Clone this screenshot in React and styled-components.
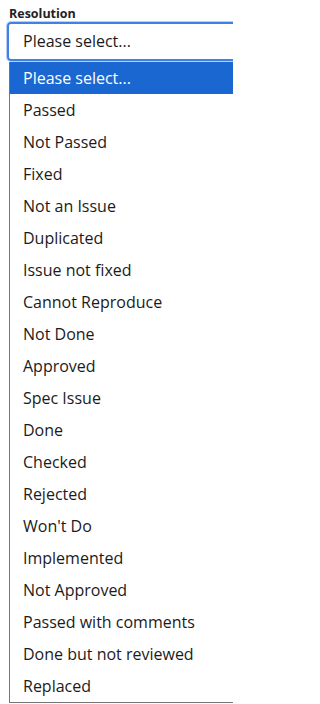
import React from "react";
import styled, { createGlobalStyle } from "styled-components";

const options = [
    "Please select...",
    "Passed",
    "Not Passed",
    "Fixed",
    "Not an Issue",
    "Duplicated",
    "Issue not fixed",
    "Cannot Reproduce",
    "Not Done",
    "Approved",
    "Spec Issue",
    "Done",
    "Checked",
    "Rejected",
    "Won't Do",
    "Implemented",
    "Not Approved",
    "Passed with comments",
    "Done but not reviewed",
    "Replaced",
];

const GlobalStyle = createGlobalStyle`
    html, body {
        margin: 0;
        padding: 0;
        background: #fff;
        overflow: hidden;
    }
    body {
        font-family: "Open Sans", "Noto Sans", sans-serif;
        color: #1b1b1b;
    }
`

const Page = styled.div`
    box-sizing: border-box;
    width: 233px;
    height: 704px;
    overflow: hidden;
    padding: 6px 0 0 7px;
`
const Label = styled.label`
    display: block;
    margin: 0 0 0 2px;
    height: 16px;
    font-size: 12.5px;
    line-height: 16px;
    font-weight: 700;
    color: #222;
`
const SelectBox = styled.div`
    box-sizing: border-box;
    display: flex;
    align-items: center;
    width: 280px;
    height: 39px;
    padding: 0 0 1px 14px;
    border: 2px solid #3f82e6;
    border-radius: 4px;
    box-shadow: 0 0 0 1px #b9d0f5;
    font-size: 16px;
    color: #1b1b1b;
`
const List = styled.ul`
    box-sizing: border-box;
    margin: 1px 0 0 2px;
    padding: 0;
    list-style: none;
    width: 280px;
    border: 1px solid #767676;
    border-top: none;
`
const Item = styled.li`
    height: 32px;
    padding: 0 0 0 13px;
    display: flex;
    align-items: center;
    font-size: 16px;
    color: ${p => p.$active ? "#fff" : "#1b1b1b"};
    background: ${p => p.$active ? "#1a67d2" : "#fff"};
`

export default function App() {
    return (
        <React.Fragment>
            <GlobalStyle/>
            <Page>
                <Label>Resolution</Label>
                <SelectBox>Please select...</SelectBox>
                <List>
                    {options.map((cur, i) => (
                        <Item key={cur} $active={i === 0}>{cur}</Item>
                    ))}
                </List>
            </Page>
        </React.Fragment>
    );
}
